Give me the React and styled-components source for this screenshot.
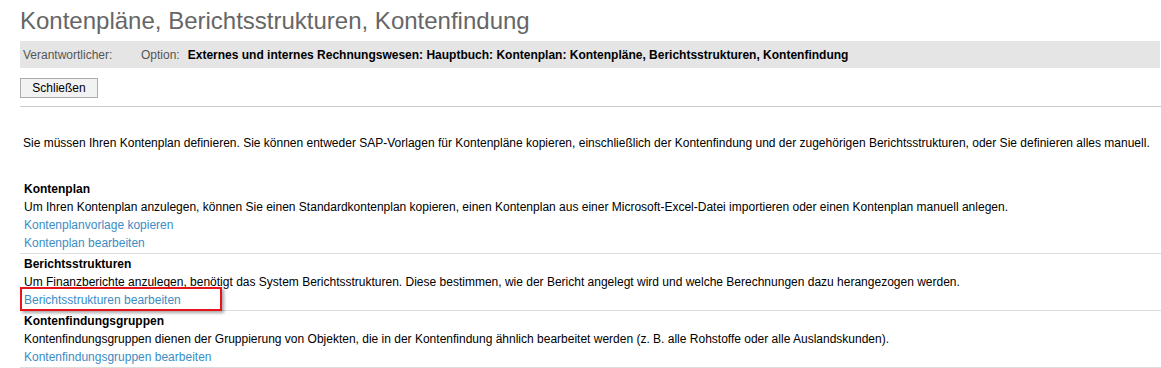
import React from "react";
import styled, { createGlobalStyle } from "styled-components";

const GlobalStyle = createGlobalStyle`
  body {
    margin: 0;
    background: #ffffff;
    font-family: "Liberation Sans", Arial, sans-serif;
    font-size: 12px;
    color: #000000;
  }
`;

const sections = [
  {
    title: "Kontenplan",
    text: "Um Ihren Kontenplan anzulegen, können Sie einen Standardkontenplan kopieren, einen Kontenplan aus einer Microsoft-Excel-Datei importieren oder einen Kontenplan manuell anlegen.",
    links: [{ label: "Kontenplanvorlage kopieren" }, { label: "Kontenplan bearbeiten" }],
  },
  {
    title: "Berichtsstrukturen",
    text: "Um Finanzberichte anzulegen, benötigt das System Berichtsstrukturen. Diese bestimmen, wie der Bericht angelegt wird und welche Berechnungen dazu herangezogen werden.",
    links: [{ label: "Berichtsstrukturen bearbeiten", marked: true }],
  },
  {
    title: "Kontenfindungsgruppen",
    text: "Kontenfindungsgruppen dienen der Gruppierung von Objekten, die in der Kontenfindung ähnlich bearbeitet werden (z. B. alle Rohstoffe oder alle Auslandskunden).",
    links: [{ label: "Kontenfindungsgruppen bearbeiten" }],
  },
];

export default function App() {
  return (
    <>
      <GlobalStyle />
      <Page>
        <Title>Kontenpläne, Berichtsstrukturen, Kontenfindung</Title>
        <InfoBar>
          <Label>Verantwortlicher:</Label>
          <Label>Option:</Label>
          <Value>
            Externes und internes Rechnungswesen: Hauptbuch: Kontenplan: Kontenpläne,
            Berichtsstrukturen, Kontenfindung
          </Value>
        </InfoBar>
        <Toolbar>
          <Button>Schließen</Button>
        </Toolbar>
        <Intro>
          Sie müssen Ihren Kontenplan definieren. Sie können entweder SAP-Vorlagen für Kontenpläne
          kopieren, einschließlich der Kontenfindung und der zugehörigen Berichtsstrukturen, oder
          Sie definieren alles manuell.
        </Intro>
        <List>
          {sections.map((s) => (
            <Section key={s.title}>
              <Heading>{s.title}</Heading>
              <Line>{s.text}</Line>
              {s.links.map((l) => (
                <Line key={l.label}>
                  <Link href="#" $marked={l.marked}>
                    {l.label}
                  </Link>
                </Line>
              ))}
            </Section>
          ))}
        </List>
      </Page>
    </>
  );
}

const Page = styled.div`
  padding-left: 20px;
  width: 1141px;
`;

const Title = styled.h1`
  margin: 0;
  height: 41px;
  line-height: 41px;
  font-size: 24px;
  font-weight: normal;
  color: #666666;
  white-space: nowrap;
`;

const InfoBar = styled.div`
  display: flex;
  align-items: center;
  height: 27px;
  width: 1140px;
  background: #e5e5e5;
  padding-left: 3px;
  box-sizing: border-box;
`;

const Label = styled.span`
  color: #555555;
  margin-right: 8px;
  &:first-child {
    width: 110px;
  }
`;

const Value = styled.span`
  font-weight: bold;
  color: #000000;
`;

const Toolbar = styled.div`
  padding: 10px 0 8px;
  border-bottom: 1px solid #cccccc;
`;

const Button = styled.button`
  height: 20px;
  width: 78px;
  padding: 0;
  font-family: "Liberation Sans", Arial, sans-serif;
  font-size: 12px;
  color: #000000;
  background: #f2f2f2;
  border: 1px solid #adadad;
  border-radius: 0;
`;

const Intro = styled.p`
  margin: 27px 0 0 3px;
  line-height: 18px;
  white-space: nowrap;
`;

const List = styled.div`
  margin-top: 27px;
`;

const Section = styled.div`
  padding: 1px 0 1px 4px;
  border-bottom: 1px solid #dddddd;
`;

const Heading = styled.div`
  font-weight: bold;
  line-height: 18px;
`;

const Line = styled.div`
  line-height: 18px;
  white-space: nowrap;
`;

const Link = styled.a`
  position: relative;
  color: #3a8dc5;
  text-decoration: none;

  ${(p) =>
    p.$marked &&
    `
    &::after {
      content: "";
      position: absolute;
      left: -4px;
      top: -6px;
      width: 198px;
      height: 20px;
      border: 2px solid #e8141b;
      box-shadow: 2px 2px 3px rgba(0, 0, 0, 0.35);
    }
  `}
`;
